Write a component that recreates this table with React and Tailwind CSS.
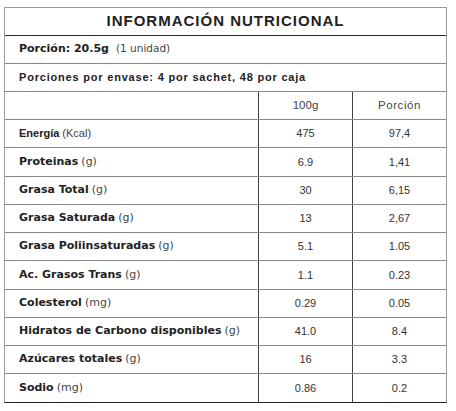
import React from "react";

const dv = "font-['DejaVu_Sans',Verdana,sans-serif]";
const lb = "font-['Liberation_Sans',Arial,sans-serif]";

const rows = [
  ["Energía", "(Kcal)", "475", "97,4", "h-[28px]", lb],
  ["Proteinas", "(g)", "6.9", "1,41", "h-[29px]", dv],
  ["Grasa Total", "(g)", "30", "6,15", "h-[28px]", dv],
  ["Grasa Saturada", "(g)", "13", "2,67", "h-[28px]", dv],
  ["Grasa Poliinsaturadas", "(g)", "5.1", "1.05", "h-[28px]", dv],
  ["Ac. Grasos Trans", "(g)", "1.1", "0.23", "h-[29px]", dv],
  ["Colesterol", "(mg)", "0.29", "0.05", "h-[28px]", dv],
  ["Hidratos de Carbono disponibles", "(g)", "41.0", "8.4", "h-[28px]", dv],
  ["Azúcares totales", "(g)", "16", "3.3", "h-[28px]", dv],
  ["Sodio", "(mg)", "0.86", "0.2", "h-[28px]", dv],
];

export default function App() {
  return (
    <div className="w-[456px] h-[411px] bg-white pt-[7px] pl-[4px] font-['Liberation_Sans',Arial,sans-serif] text-[#222]">
      <div className="w-[443px] border border-[#9a9a9a] border-b-[#222]">
        <div className="h-[28px] border-b border-[#2a2a2a] flex items-center justify-center">
          <span className="text-[15px] font-bold tracking-[1px]">INFORMACIÓN NUTRICIONAL</span>
        </div>
        <div className="h-[28px] border-b border-[#8a8a8a] flex items-center pl-[14px] text-[11px]">
          <span className={dv}>
            <span className="font-bold">Porción: 20.5g</span>
            <span className="ml-[7px] text-[#444] text-[10.5px]">(1 unidad)</span>
          </span>
        </div>
        <div className="h-[28px] border-b border-[#8a8a8a] flex items-center pl-[14px] text-[11px]">
          <span className="font-bold tracking-[0.8px]">Porciones por envase: 4 por sachet, 48 por caja</span>
        </div>
        <div className="h-[28px] border-b border-[#8a8a8a] grid grid-cols-[254px_94px_93px] text-[11.5px] text-[#444]">
          <div className="border-r border-[#444]"></div>
          <div className="border-r border-[#444] flex items-center justify-center">100g</div>
          <div className="flex items-center justify-center tracking-[0.6px]">Porción</div>
        </div>
        {rows.map((r, i) => (
          <div
            key={i}
            className={`${r[4]} ${i < rows.length - 1 ? "border-b border-[#8a8a8a]" : ""} grid grid-cols-[254px_94px_93px] text-[11px]`}
          >
            <div className="border-r border-[#444] flex items-center pl-[14px]">
              <span className={r[5]}>
                <span className="font-bold">{r[0]}</span>
                <span className="ml-[3px] text-[#444]">{r[1]}</span>
              </span>
            </div>
            <div className="border-r border-[#444] flex items-center justify-center text-[#333]">{r[2]}</div>
            <div className="flex items-center justify-center text-[#333]">{r[3]}</div>
          </div>
        ))}
      </div>
    </div>
  );
}
